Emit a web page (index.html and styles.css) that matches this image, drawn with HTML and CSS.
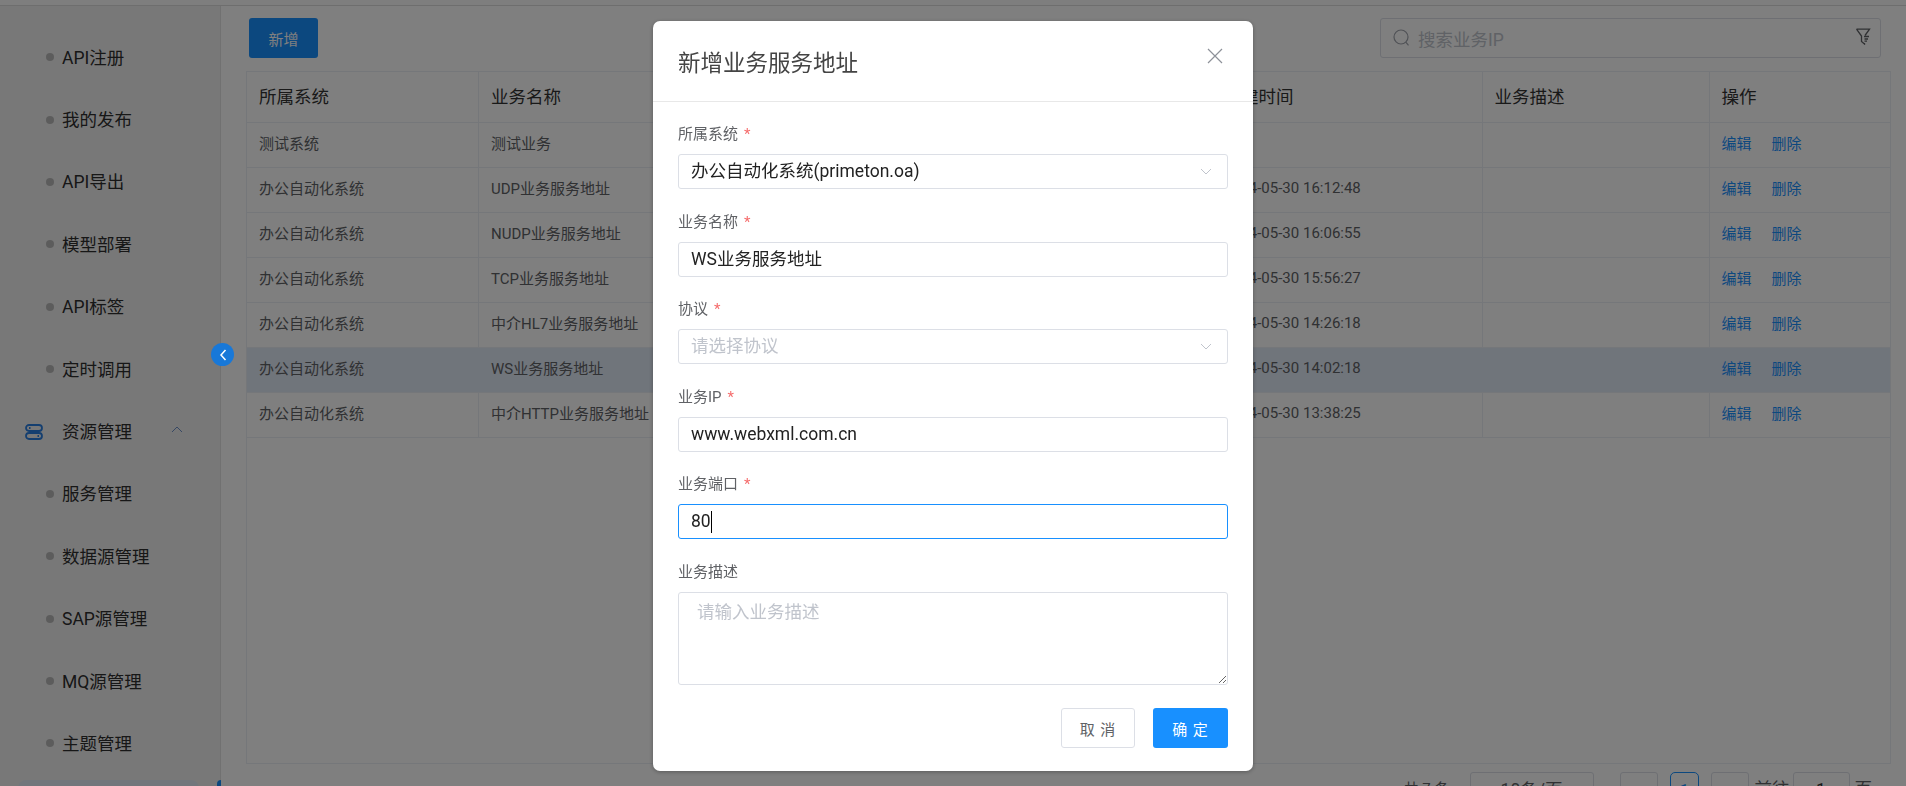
FILE: index.html
```html
<!DOCTYPE html>
<html lang="zh-CN">
<head>
<meta charset="utf-8">
<title>业务服务地址</title>
<link rel="stylesheet" href="styles.css">
</head>
<body>
<div class="app">
  <div class="topbar"></div>
  <div class="main">
    <aside class="sidebar">
      <ul class="menu">
        <li class="menu-item"><i class="dot"></i>API注册</li>
        <li class="menu-item"><i class="dot"></i>我的发布</li>
        <li class="menu-item"><i class="dot"></i>API导出</li>
        <li class="menu-item"><i class="dot"></i>模型部署</li>
        <li class="menu-item"><i class="dot"></i>API标签</li>
        <li class="menu-item"><i class="dot"></i>定时调用</li>
        <li class="menu-item menu-group">
          <svg class="group-icon" viewBox="0 0 18 16" width="18" height="16" fill="none" stroke="currentColor" stroke-width="1.8"><rect x="1" y="1" width="16" height="6" rx="3"/><rect x="1" y="9" width="16" height="6" rx="3"/><path d="M4 4h1.5M12.5 12H14"/></svg>
          <span class="group-label">资源管理</span>
          <svg class="group-arrow" viewBox="0 0 12 7" width="12" height="7" fill="none" stroke="currentColor" stroke-width="1"><path d="M1 6l5-5 5 5"/></svg>
        </li>
        <li class="menu-item"><i class="dot"></i>服务管理</li>
        <li class="menu-item"><i class="dot"></i>数据源管理</li>
        <li class="menu-item"><i class="dot"></i>SAP源管理</li>
        <li class="menu-item"><i class="dot"></i>MQ源管理</li>
        <li class="menu-item"><i class="dot"></i>主题管理</li>
        <li class="menu-item menu-active"><i class="dot"></i>业务服务地址</li>
      </ul>
      <button class="collapse" type="button">
        <svg viewBox="0 0 8 12" width="8" height="12" fill="none" stroke="currentColor" stroke-width="1.5"><path d="M6.5 1L2 6l4.5 5"/></svg>
      </button>
    </aside>
    <section class="content">
      <div class="toolbar">
        <button class="btn-add" type="button">新增</button>
        <div class="search">
          <svg class="search-icon" viewBox="0 0 17 18" width="17" height="18" fill="none" stroke="currentColor" stroke-width="1.2"><circle cx="8" cy="8" r="7"/><path d="M12.8 13.2l2.7 3.2"/></svg>
          <span class="search-ph">搜索业务IP</span>
          <svg class="filter-icon" viewBox="0 0 16 17" width="16" height="17" fill="none" stroke="currentColor" stroke-width="1.3"><path d="M1.5 1.2h13L10 7.5M1.5 1.2L6.5 8v5.5l3 2.5v-1"/><path d="M9 8.5h5M9.5 11h3.5M9.5 13.2h2.5"/></svg>
        </div>
      </div>
      <div class="table-wrap">
        <table class="grid">
          <colgroup>
            <col class="c-sys"><col class="c-name"><col class="c-rest"><col class="c-time"><col class="c-desc"><col class="c-op">
          </colgroup>
          <thead>
            <tr><th>所属系统</th><th>业务名称</th><th></th><th>创建时间</th><th>业务描述</th><th>操作</th></tr>
          </thead>
          <tbody>
            <tr><td>测试系统</td><td>测试业务</td><td></td><td></td><td></td><td><a class="op">编辑</a><a class="op">删除</a></td></tr>
            <tr><td>办公自动化系统</td><td>UDP业务服务地址</td><td></td><td>2024-05-30 16:12:48</td><td></td><td><a class="op">编辑</a><a class="op">删除</a></td></tr>
            <tr><td>办公自动化系统</td><td>NUDP业务服务地址</td><td></td><td>2024-05-30 16:06:55</td><td></td><td><a class="op">编辑</a><a class="op">删除</a></td></tr>
            <tr><td>办公自动化系统</td><td>TCP业务服务地址</td><td></td><td>2024-05-30 15:56:27</td><td></td><td><a class="op">编辑</a><a class="op">删除</a></td></tr>
            <tr><td>办公自动化系统</td><td>中介HL7业务服务地址</td><td></td><td>2024-05-30 14:26:18</td><td></td><td><a class="op">编辑</a><a class="op">删除</a></td></tr>
            <tr class="row-current"><td>办公自动化系统</td><td>WS业务服务地址</td><td></td><td>2024-05-30 14:02:18</td><td></td><td><a class="op">编辑</a><a class="op">删除</a></td></tr>
            <tr><td>办公自动化系统</td><td>中介HTTP业务服务地址</td><td></td><td>2024-05-30 13:38:25</td><td></td><td><a class="op">编辑</a><a class="op">删除</a></td></tr>
          </tbody>
        </table>
      </div>
      <div class="pager">
        <span class="pager-total">共 7 条</span>
        <span class="pager-size">10条/页</span>
        <span class="pager-btn"><svg viewBox="0 0 8 12" width="8" height="12" fill="none" stroke="currentColor" stroke-width="1.2"><path d="M6.5 1L2 6l4.5 5"/></svg></span>
        <span class="pager-num">1</span>
        <span class="pager-btn"><svg viewBox="0 0 8 12" width="8" height="12" fill="none" stroke="currentColor" stroke-width="1.2"><path d="M1.5 1L6 6l-4.5 5"/></svg></span>
        <span class="pager-go">前往</span>
        <span class="pager-jump">1</span>
        <span class="pager-unit">页</span>
      </div>
    </section>
  </div>
</div>
<div class="overlay">
  <div class="modal">
    <header class="modal-head">
      <h2 class="modal-title">新增业务服务地址</h2>
      <svg class="modal-close" viewBox="0 0 16 16" width="16" height="16" fill="none" stroke="currentColor" stroke-width="1.2"><path d="M1 1l14 14M15 1L1 15"/></svg>
    </header>
    <form class="modal-body">
      <div class="field">
        <label class="field-label req">所属系统</label>
        <div class="control">办公自动化系统(primeton.oa)<svg class="chev" viewBox="0 0 12 7" width="12" height="7" fill="none" stroke="currentColor" stroke-width="1"><path d="M1 1l5 5 5-5"/></svg></div>
      </div>
      <div class="field">
        <label class="field-label req">业务名称</label>
        <div class="control">WS业务服务地址</div>
      </div>
      <div class="field">
        <label class="field-label req">协议</label>
        <div class="control control-empty">请选择协议<svg class="chev" viewBox="0 0 12 7" width="12" height="7" fill="none" stroke="currentColor" stroke-width="1"><path d="M1 1l5 5 5-5"/></svg></div>
      </div>
      <div class="field">
        <label class="field-label req">业务IP</label>
        <div class="control">www.webxml.com.cn</div>
      </div>
      <div class="field">
        <label class="field-label req">业务端口</label>
        <div class="control control-focus">80<span class="caret"></span></div>
      </div>
      <div class="field field-area">
        <label class="field-label">业务描述</label>
        <textarea class="area" placeholder="请输入业务描述"></textarea>
      </div>
      <div class="modal-foot">
        <button class="btn btn-cancel" type="button">取 消</button>
        <button class="btn btn-ok" type="button">确 定</button>
      </div>
    </form>
  </div>
</div>
</body>
</html>
```

FILE: styles.css
```css
* { box-sizing: border-box; }
html, body { margin: 0; height: 100%; overflow: hidden; }
body {
  font-family: Roboto, "Noto Sans CJK SC", sans-serif;
  background: #fff;
  color: #333;
}
.app { height: 786px; display: flex; flex-direction: column; overflow: hidden; }
.topbar { height: 6px; flex: none; background: #fdfdfd; border-bottom: 1px solid #dcdcdc; }
.main { flex: 1; display: flex; min-height: 0; }

.sidebar {
  position: relative;
  flex: none;
  width: 221px;
  background: #f1f1f1;
  border-right: 1px solid #e2e2e2;
  padding-top: 20px;
}
.menu { list-style: none; margin: 0; padding: 0; }
.menu-item {
  height: 62.4px;
  display: flex;
  align-items: center;
  padding: 0 0 2px 46px;
  font-size: 17.5px;
  color: #2f2f2f;
  white-space: nowrap;
}
.dot { width: 8px; height: 8px; border-radius: 50%; background: #b9b9b9; margin: 2px 8px 0 0; flex: none; }
.menu-group { padding-left: 25px; }
.group-icon { color: #2a7fe0; margin: 2px 19px 0 0; flex: none; }
.group-label { width: 109px; }
.group-arrow { color: #6f90c8; margin-top: -3px; }
.menu-active { position: relative; }
.menu-active::before {
  content: "";
  position: absolute;
  left: 18px;
  right: 21px;
  top: 5px;
  bottom: 5px;
  background: #e3ecf8;
  border-radius: 8px;
}
.menu-active::after {
  content: "";
  position: absolute;
  right: -1px;
  top: 5px;
  bottom: 5px;
  width: 4px;
  background: #1890ff;
  border-radius: 4px 0 0 4px;
}
.collapse {
  position: absolute;
  left: 211px;
  top: 337px;
  width: 23px;
  height: 23px;
  padding: 0;
  border: 0;
  border-radius: 50%;
  background: #1878d8;
  color: #fff;
  display: flex;
  align-items: center;
  justify-content: center;
  z-index: 2;
}

.content { flex: 1; min-width: 0; padding: 12px 15px 0 25px; display: flex; flex-direction: column; }
.toolbar { display: flex; justify-content: space-between; padding: 0 10px 0 3px; margin-bottom: 13px; }
.btn-add {
  width: 69px;
  height: 40px;
  border: 0;
  border-radius: 3px;
  background: #1890ff;
  color: #fff;
  font: inherit;
  font-size: 15px;
  padding: 0;
}
.search {
  width: 501px;
  height: 40px;
  border: 1px solid #dcdfe6;
  border-radius: 3px;
  display: flex;
  align-items: center;
  padding: 0 9px 0 12px;
  color: #c0c4cc;
}
.search-icon { color: #a0a4ac; flex: none; margin-right: 8px; }
.search-ph { flex: 1; font-size: 17.5px; }
.filter-icon { color: #606266; flex: none; margin-top: -3px; }

.table-wrap {
  height: 693px;
  flex: none;
  border: 1px solid #ebeef5;
}
.grid { width: 100%; border-collapse: collapse; table-layout: fixed; }
.c-sys, .c-name { width: 231.5px; }
.c-time { width: 271px; }
.c-desc { width: 227px; }
.c-op { width: 181px; }
.grid th, .grid td {
  text-align: left;
  padding: 0 0 2px 12px;
  border-right: 1px solid #ebeef5;
  border-bottom: 1px solid #ebeef5;
  white-space: nowrap;
  overflow: hidden;
}
.grid th:last-child, .grid td:last-child { border-right: 0; }
.grid th { height: 50px; font-size: 17.5px; font-weight: 400; color: #333; }
.grid td { height: 45px; padding-bottom: 4px; font-size: 15px; color: #606266; }
.row-current td { background: #e1eaf6; border-right-color: #e1eaf6; }
.op { color: #1890ff; margin-right: 20px; }

.pager {
  display: flex;
  align-items: flex-start;
  height: 40px;
  margin-top: 8px;
  padding-right: 19px;
  justify-content: flex-end;
  font-size: 17.5px;
  line-height: 35px;
  color: #606266;
}
.pager-total { margin-right: 20px; font-size: 15px; }
.pager-size {
  width: 124px;
  height: 40px;
  border: 1px solid #dcdfe6;
  border-radius: 3px;
  text-align: center;
  margin-right: 26px;
}
.pager-btn {
  width: 38px;
  height: 40px;
  border: 1px solid #dcdfe6;
  border-radius: 3px;
  display: flex;
  align-items: center;
  justify-content: center;
  color: #c0c4cc;
}
.pager-num {
  width: 29px;
  height: 40px;
  margin: 0 12px;
  border: 1px solid #1890ff;
  border-radius: 5px;
  text-align: center;
  font-size: 15px;
  color: #1890ff;
  font-weight: 700;
}
.pager-go { margin: 0 3px 0 6px; }
.pager-jump {
  width: 57px;
  height: 40px;
  border: 1px solid #dcdfe6;
  border-radius: 3px;
  text-align: center;
  color: #333;
}
.pager-unit { margin-left: 5px; }

.overlay {
  position: fixed;
  inset: 0;
  background: rgba(0, 0, 0, .5);
  display: flex;
  justify-content: center;
  align-items: flex-start;
  padding-top: 21px;
}
.modal {
  width: 600px;
  height: 750px;
  background: #fff;
  border-radius: 7px;
  box-shadow: 0 1px 4px rgba(0, 0, 0, .3);
}
.modal-head {
  height: 81px;
  border-bottom: 1px solid #e8e8e8;
  padding: 0 30px 0 25px;
  display: flex;
  align-items: center;
  justify-content: space-between;
}
.modal-title { margin: 0; font-size: 22.5px; font-weight: 400; color: #444; }
.modal-close { color: #8d9199; margin-top: -10px; }
.modal-body { padding: 17px 25px 0; }
.field { height: 87.5px; }
.field-area { height: auto; }
.field-label {
  display: block;
  height: 30px;
  line-height: 30px;
  margin-bottom: 5px;
  font-size: 15px;
  color: #606266;
}
.req::after { content: "*"; color: #f56c6c; margin-left: 6px; font-size: 15px; }
.control {
  position: relative;
  height: 35px;
  border: 1px solid #dcdfe6;
  border-radius: 3px;
  padding: 0 12px;
  line-height: 33px;
  font-size: 17.5px;
  color: #222;
}
.control-empty { color: #c0c4cc; }
.control-focus { border-color: #1890ff; display: flex; align-items: center; }
.caret { width: 1px; height: 22px; background: #000; }
.chev { position: absolute; right: 15px; top: 13px; color: #c0c4cc; }
.area {
  display: block;
  width: 100%;
  height: 93px;
  border: 1px solid #dcdfe6;
  border-radius: 3px;
  padding: 6px 18px;
  font-family: inherit;
  font-size: 17.5px;
  line-height: 26px;
  outline: 0;
}
.area::placeholder { color: #c0c4cc; opacity: 1; }
.modal-foot { display: flex; justify-content: flex-end; gap: 18px; margin-top: 23.5px; }
.btn {
  height: 40px;
  padding: 0;
  border-radius: 3px;
  font-family: inherit;
  font-size: 15px;
  letter-spacing: 1px;
}
.btn-cancel { width: 74px; background: #fff; border: 1px solid #dcdfe6; color: #606266; }
.btn-ok { width: 75px; background: #1890ff; border: 0; color: #fff; }
```
